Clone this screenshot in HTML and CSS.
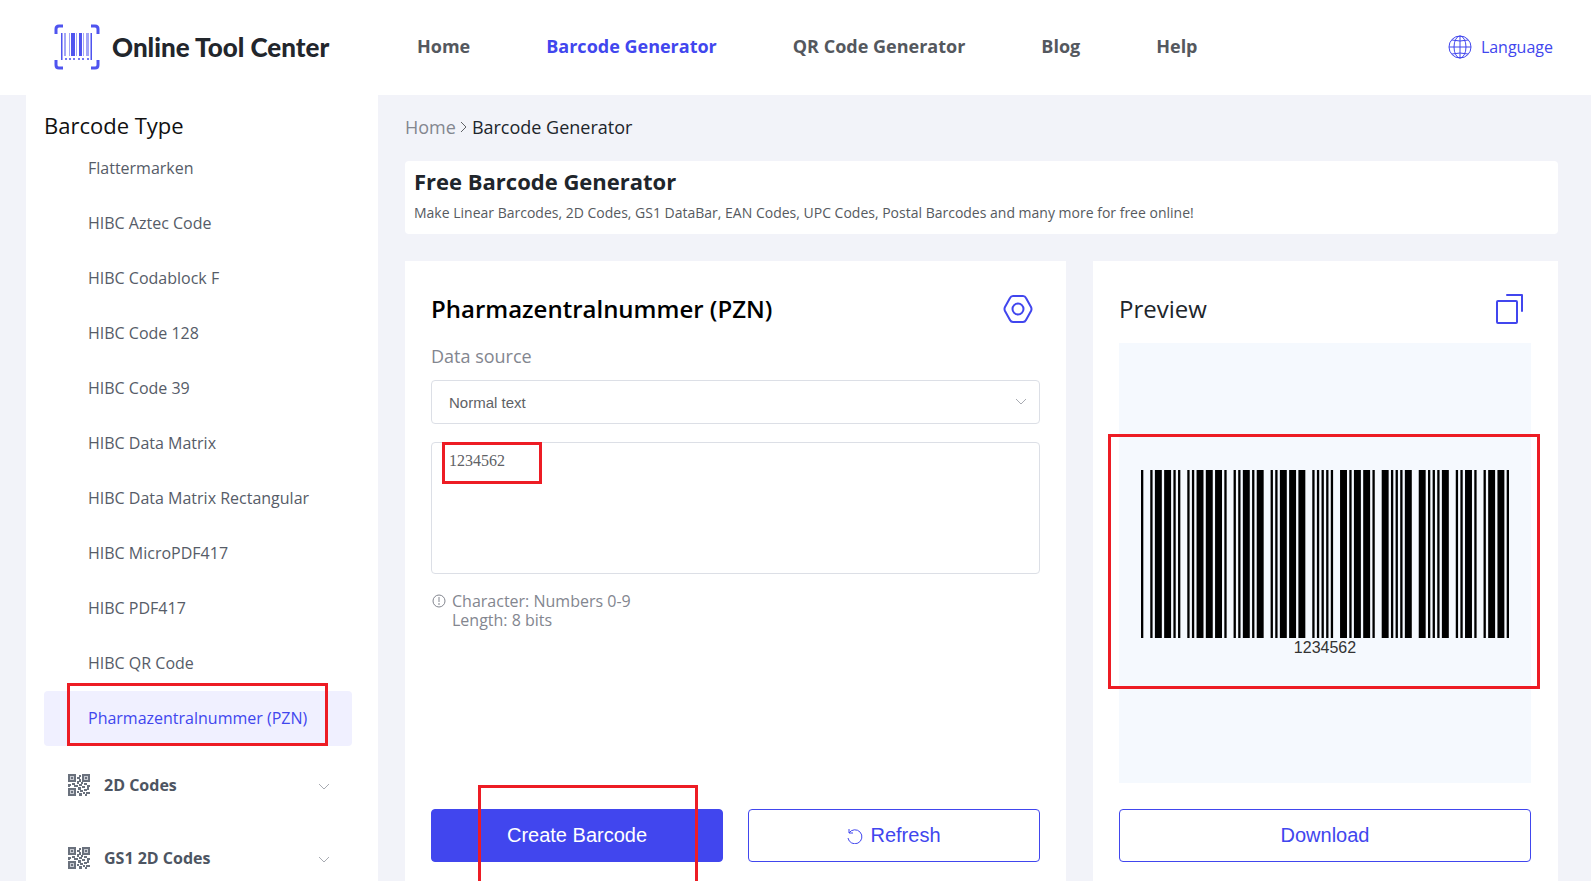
FILE: index.html
```html
<!DOCTYPE html>
<html lang="en">

<head>
    <meta charset="utf-8">
    <title>Free Barcode Generator</title>
    <link rel="stylesheet" href="styles.css">
</head>

<body>
    <!-- shared icons -->
    <svg class="sprite" aria-hidden="true">
        <symbol id="icon-qr" viewBox="0 0 22 22">
            <path fill="#c9ccd3" d="M0 0h8v8H0zM14 0h8v8h-8zM0 14h8v8H0z" />
            <path fill="none" stroke="currentColor" stroke-width="2" d="M1 1h6v6H1zM15 1h6v6h-6zM1 15h6v6H1z" />
            <path fill="currentColor" d="M3 3h2v2H3zM17 3h2v2h-2zM3 17h2v2H3zM11 1h2v2h-2zM9 3h3v2H9zM11 5h2v3h-2zM9 7h2v3H9zM0 10h3v2H0zM4 9h3v2H4zM6 11h4v2H6zM11 10h3v2h-3zM13 8h2v2h-2zM16 9h3v2h-3zM19 11h3v2h-3zM14 12h3v2h-3zM10 13h3v3h-3zM12 16h3v2h-3zM9 17h2v2H9zM11 19h3v3h-3zM16 15h3v2h-3zM19 13h2v3h-2zM15 18h2v2h-2zM18 18h4v2h-4zM17 20h2v2h-2zM0 12h2v1H0z" />
        </symbol>
        <symbol id="icon-down" viewBox="0 0 12 12">
            <path fill="none" stroke="currentColor" d="M1 3l5 5 5-5" />
        </symbol>
    </svg>

    <header class="header">
        <a class="logo" href="#">
            <svg class="logo-icon" viewBox="0 0 46 46" aria-hidden="true">
                <path fill="none" stroke="#4f54ef" stroke-width="3" d="M2 10V5q0-3 3-3h4M37 2h4q3 0 3 3v5M2 36v5q0 3 3 3h4M37 44h4q3 0 3-3v-5" />
                <path fill="#4f54ef" d="M7 9h1v27H7zM17 9h4v23h-4zM25 9h3v23h-3zM37 9h1v27h-1z" />
                <path fill="#a3a6f7" d="M8 9h1v27H8zM10 9h2v23h-2zM15 9h1v23h-1zM22 9h1v23h-1zM29 9h1v23h-1zM32 9h3v23h-3zM36 9h1v27h-1z" />
                <path fill="#7478f2" d="M11 34h2v2h-2zM15 34h2v2h-2zM19 34h2v2h-2zM24 34h2v2h-2zM28 34h2v2h-2zM33 34h2v2h-2z" />
            </svg>
            <span>Online Tool Center</span>
        </a>
        <nav class="nav">
            <a href="#">Home</a>
            <a href="#" class="active">Barcode Generator</a>
            <a href="#">QR Code Generator</a>
            <a href="#">Blog</a>
            <a href="#">Help</a>
        </nav>
        <a class="language" href="#">
            <svg width="24" height="24" viewBox="0 0 24 24" aria-hidden="true">
                <g fill="none" stroke="currentColor">
                    <circle cx="12" cy="12" r="11" />
                    <ellipse cx="12" cy="12" rx="6" ry="11" />
                    <path d="M12 1v22M1 12h22M4 5q8 2 16 0M4 19q8-2 16 0" />
                </g>
            </svg>
            Language
        </a>
    </header>

    <div class="page">
        <aside class="sidebar">
            <h2>Barcode Type</h2>
            <ul class="types">
                <li><a href="#">Flattermarken</a></li>
                <li><a href="#">HIBC Aztec Code</a></li>
                <li><a href="#">HIBC Codablock F</a></li>
                <li><a href="#">HIBC Code 128</a></li>
                <li><a href="#">HIBC Code 39</a></li>
                <li><a href="#">HIBC Data Matrix</a></li>
                <li><a href="#">HIBC Data Matrix Rectangular</a></li>
                <li><a href="#">HIBC MicroPDF417</a></li>
                <li><a href="#">HIBC PDF417</a></li>
                <li><a href="#">HIBC QR Code</a></li>
                <li class="marked">
                    <a href="#" class="active">Pharmazentralnummer (PZN)</a>
                    <span class="mark mark-type"></span>
                </li>
            </ul>
            <button class="group" type="button">
                <svg class="group-icon"><use href="#icon-qr" /></svg>
                <span>2D Codes</span>
                <svg class="chevron"><use href="#icon-down" /></svg>
            </button>
            <button class="group" type="button">
                <svg class="group-icon"><use href="#icon-qr" /></svg>
                <span>GS1 2D Codes</span>
                <svg class="chevron"><use href="#icon-down" /></svg>
            </button>
        </aside>

        <main class="content">
            <div class="breadcrumb">
                <a href="#">Home</a>
                <svg width="8" height="14" viewBox="0 0 8 14" aria-hidden="true">
                    <path fill="none" stroke="#606266" d="M1 2l5 5-5 5" />
                </svg>
                <span>Barcode Generator</span>
            </div>

            <section class="banner">
                <h1>Free Barcode Generator</h1>
                <p>Make Linear Barcodes, 2D Codes, GS1 DataBar, EAN Codes, UPC Codes, Postal Barcodes and many more for free online!</p>
            </section>

            <div class="panels">
                <section class="panel">
                    <div class="panel-head">
                        <h2>Pharmazentralnummer (PZN)</h2>
                        <button class="icon-button settings" type="button" aria-label="Settings">
                            <svg width="32" height="32" viewBox="0 0 32 32">
                                <g fill="none" stroke="currentColor" stroke-width="2">
                                    <path d="M11 3h10q2 0 3 2l5 9q1 2 0 4l-5 9q-1 2-3 2H11q-2 0-3-2l-5-9q-1-2 0-4l5-9q1-2 3-2z" />
                                    <circle cx="16" cy="16" r="5.500" />
                                </g>
                            </svg>
                        </button>
                    </div>
                    <label class="label" for="source">Data source</label>
                    <div class="select">
                        <select id="source">
                            <option>Normal text</option>
                        </select>
                        <svg class="chevron"><use href="#icon-down" /></svg>
                    </div>
                    <div class="data marked">
                        <textarea id="data" aria-label="Barcode data">1234562</textarea>
                        <span class="mark mark-data"></span>
                    </div>
                    <div class="hint">
                        <svg width="14" height="14" viewBox="0 0 14 14" aria-hidden="true">
                            <circle cx="7" cy="7" r="6" fill="none" stroke="currentColor" />
                            <path stroke="currentColor" d="M7 3v5M7 9v2" />
                        </svg>
                        <p>Character: Numbers 0-9<br>Length: 8 bits</p>
                    </div>
                    <div class="actions">
                        <div class="marked">
                            <button class="button primary" type="button">Create Barcode</button>
                            <span class="mark mark-create"></span>
                        </div>
                        <button class="button" type="button">
                            <svg width="16" height="16" viewBox="0 0 16 16" aria-hidden="true">
                                <path fill="none" stroke="currentColor" d="M2 1v4h4M2 5a7 7 0 1 1-1 5" />
                            </svg>
                            Refresh
                        </button>
                    </div>
                </section>

                <section class="panel preview-panel">
                    <div class="panel-head">
                        <h2 class="light">Preview</h2>
                        <button class="icon-button" type="button" aria-label="Copy">
                            <svg width="36" height="32" viewBox="0 0 36 32">
                                <rect x="2" y="8" width="20" height="22" rx="1" fill="none" stroke="currentColor" stroke-width="2" />
                                <path fill="none" stroke="currentColor" stroke-width="2" stroke-linecap="round" stroke-linejoin="round" d="M12 2h15v16" />
                            </svg>
                        </button>
                    </div>
                    <div class="preview marked">
                        <!-- Code 39: bar, space, bar... one row per character of *-1234562* -->
                        <svg class="barcode" viewBox="0 0 159 10" preserveAspectRatio="none" role="img" aria-label="Barcode 1234562">
                            <path stroke="#000" stroke-width="10" d="M0 5H159" stroke-dasharray="
                                1 3 1 1 3 1 3 1 1 1
                                1 3 1 1 1 1 3 1 3 1
                                3 1 1 3 1 1 1 1 3 1
                                1 1 3 3 1 1 1 1 3 1
                                3 1 3 3 1 1 1 1 1 1
                                1 1 1 3 3 1 1 1 3 1
                                3 1 1 3 3 1 1 1 1 1
                                1 1 3 3 3 1 1 1 1 1
                                1 1 3 3 1 1 1 1 3 1
                                1 3 1 1 3 1 3 1 1 1" />
                        </svg>
                        <span class="barcode-text">1234562</span>
                        <span class="mark mark-preview"></span>
                    </div>
                    <button class="button" type="button">Download</button>
                </section>
            </div>
        </main>
    </div>
</body>

</html>
```
FILE: styles.css
```css
* {
    box-sizing: border-box;
}

body {
    margin: 0;
    height: 100vh;
    overflow: hidden;
    background-color: #f2f3f9;
    color: #20252b;
    font-family: "Open Sans", "Noto Sans", sans-serif;
    font-size: 16px;
}

h1, h2, p, ul {
    margin: 0;
    padding: 0;
}

a {
    color: inherit;
    text-decoration: none;
}

button {
    font-family: "Liberation Sans", Arial, sans-serif;
    cursor: pointer;
}

.sprite {
    display: none;
}

/* Header */
.header {
    display: flex;
    align-items: center;
    height: 95px;
    padding: 0 38px 2px 54px;
    background-color: #fff;
}

.logo {
    display: flex;
    align-items: center;
    gap: 12px;
    width: 363px;
    color: #22262c;
    font-family: Lato, sans-serif;
    font-size: 26px;
    font-weight: 900;
}

.logo-icon {
    width: 46px;
    height: 46px;
}

.nav {
    display: flex;
    gap: 76px;
    padding-bottom: 2px;
    color: #54585e;
    font-size: 18px;
    font-weight: 700;
}

.nav .active {
    color: #4146ee;
}

.language {
    display: flex;
    align-items: center;
    gap: 9px;
    margin-left: auto;
    color: #4146ee;
}

/* Sidebar */
.page {
    display: flex;
    align-items: stretch;
    gap: 27px;
    padding: 0 33px 0 26px;
}

.sidebar {
    flex: 0 0 352px;
    padding: 0 26px 24px 18px;
    background-color: #fff;
}

.sidebar h2 {
    height: 46px;
    color: #111;
    font-size: 22px;
    font-weight: 400;
    line-height: 60px;
}

.types {
    margin-bottom: 2px;
    list-style: none;
}

.types a {
    display: block;
    padding-left: 44px;
    border-radius: 4px;
    color: #565c68;
    line-height: 55px;
}

.types .active {
    background-color: #f0f0ff;
    color: #4146ee;
}

.group {
    display: flex;
    align-items: center;
    width: 100%;
    height: 73px;
    padding: 0 22px 0 24px;
    border: none;
    background: none;
    color: #4d5562;
    font-family: inherit;
    font-size: 16px;
    font-weight: 700;
}

.group-icon {
    width: 22px;
    height: 22px;
    margin-right: 14px;
    color: #6a717d;
}

.chevron {
    width: 12px;
    height: 12px;
    color: #a8abb2;
}

.group .chevron {
    margin-top: 4px;
    margin-left: auto;
}

/* Content */
.content {
    flex: 1;
    min-width: 0;
}

.breadcrumb {
    display: flex;
    align-items: center;
    gap: 4px;
    height: 66px;
    padding-bottom: 2px;
    font-size: 18px;
}

.breadcrumb a {
    color: #83868f;
}

.banner {
    height: 73px;
    margin-bottom: 27px;
    padding: 4px 9px;
    border-radius: 4px;
    background-color: #fff;
}

.banner h1 {
    font-size: 22px;
    line-height: 32px;
}

.banner p {
    color: #565a60;
    font-size: 14px;
    line-height: 32px;
}

.panels {
    display: grid;
    grid-template-columns: 661fr 465fr;
    gap: 27px;
}

.panel {
    display: flex;
    flex-direction: column;
    padding: 26px;
    background-color: #fff;
}

.preview-panel {
    padding-right: 27px;
}

.panel-head {
    display: flex;
    align-items: center;
    justify-content: space-between;
    height: 44px;
}

.panel h2 {
    padding-bottom: 2px;
    color: #000;
    font-size: 24px;
    font-weight: 600;
}

.panel .light {
    color: #20252b;
    font-weight: 400;
}

.icon-button {
    display: flex;
    padding: 0;
    border: none;
    background: none;
    color: #4146ee;
}

.settings {
    margin-right: 6px;
}

.label {
    height: 49px;
    color: #83868f;
    font-size: 18px;
    line-height: 50px;
}

.select {
    position: relative;
}

.select select {
    display: block;
    width: 100%;
    height: 44px;
    padding: 0 17px;
    border: 1px solid #dcdfe6;
    border-radius: 4px;
    appearance: none;
    background-color: #fff;
    color: #606266;
    font-family: "Liberation Sans", Arial, sans-serif;
    font-size: 15px;
}

.select .chevron {
    position: absolute;
    top: 16px;
    right: 13px;
    pointer-events: none;
}

.data {
    margin-top: 18px;
}

.data textarea {
    display: block;
    width: 100%;
    height: 132px;
    padding: 8px 17px;
    border: 1px solid #dcdfe6;
    border-radius: 4px;
    resize: none;
    color: #606266;
    font-family: "Liberation Serif", serif;
    font-size: 16px;
    line-height: 20px;
}

.hint {
    display: flex;
    gap: 6px;
    height: 209px;
    padding: 18px 1px;
    color: #83868f;
    line-height: 19px;
}

.hint svg {
    margin-top: 2px;
}

.actions {
    display: grid;
    grid-template-columns: 1fr 1fr;
    gap: 25px;
    margin-top: 26px;
}

.button {
    display: flex;
    align-items: center;
    justify-content: center;
    gap: 7px;
    width: 100%;
    height: 53px;
    border: 1px solid #4146ee;
    border-radius: 4px;
    background-color: #fff;
    color: #4146ee;
    font-size: 20px;
}

.primary {
    background-color: #4146ee;
    color: #fff;
}

.preview {
    display: flex;
    flex-direction: column;
    align-items: center;
    height: 440px;
    margin: 12px 0 26px;
    padding: 127px 22px 0;
    background-color: #f5f9fe;
}

.barcode {
    width: 100%;
    height: 168px;
}

.barcode-text {
    color: #333;
    font-family: "Liberation Sans", Arial, sans-serif;
    font-size: 16px;
    line-height: 20px;
}

/* Red highlight boxes laid over the steps */
.marked {
    position: relative;
}

.mark {
    position: absolute;
    border: 3px solid #ed1c24;
    pointer-events: none;
}

.mark-type {
    top: -8px;
    bottom: 0;
    left: 23px;
    right: 24px;
}

.mark-data {
    top: 0;
    left: 11px;
    width: 100px;
    height: 42px;
}

.mark-create {
    top: -24px;
    left: 47px;
    right: 25px;
    height: 120px;
}

.mark-preview {
    top: 91px;
    left: -11px;
    right: -9px;
    height: 255px;
}
```
